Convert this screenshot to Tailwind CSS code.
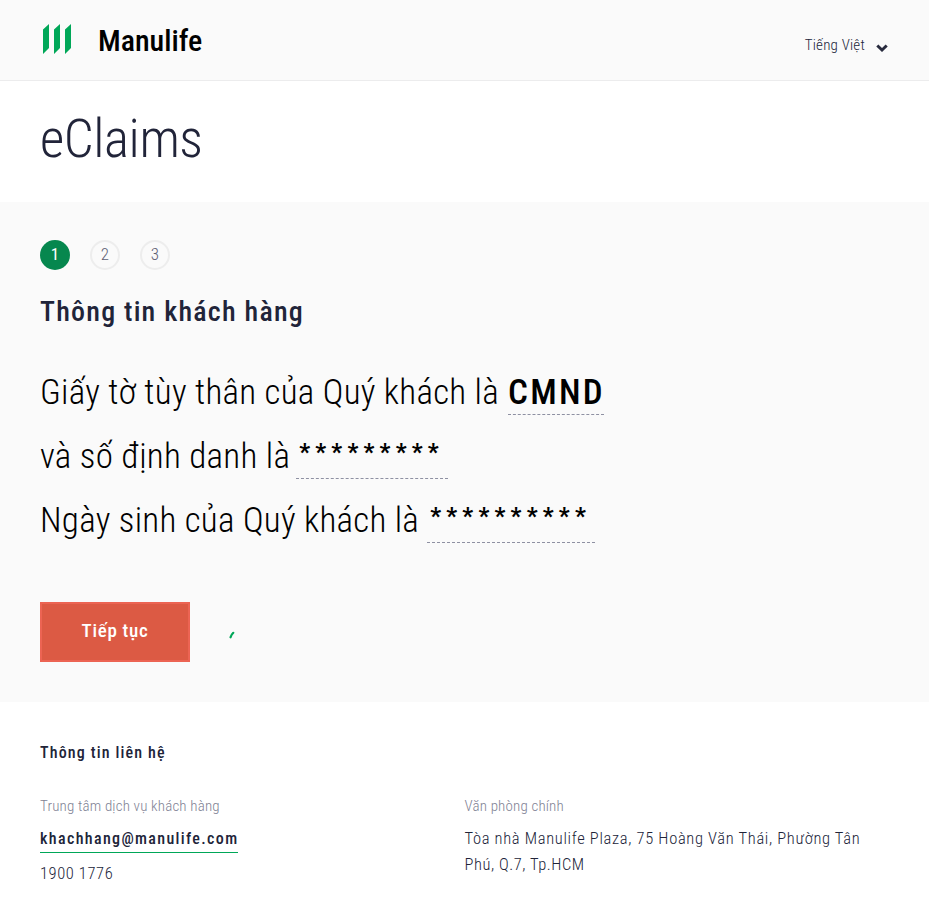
<!DOCTYPE html>
<html lang="vi">
<head>
<meta charset="utf-8">
<title>eClaims</title>
<script src="https://cdn.jsdelivr.net/npm/@tailwindcss/browser@4"></script>
</head>
<body class="bg-white font-['Roboto','Noto_Sans',sans-serif] text-[#212439] [font-stretch:75%]">
<header class="flex h-[81px] justify-between border-b border-[#ececed] bg-[#fafafa] pr-[41px] pl-[43px]">
  <div class="flex items-start">
    <svg class="mt-[24px] h-[30px] w-[28px]" viewBox="0 0 28 30" fill="#00a758"><path d="M0 5.5 6 0V24L0 30ZM11 5.5 17 0V24L11 30ZM22 5.5 28 0V24L22 30Z"/></svg>
    <span class="mt-[21px] ml-[27px] text-[30px] leading-[40px] font-medium whitespace-nowrap text-black">Manulife</span>
  </div>
  <div class="flex items-start">
    <span class="mt-[34px] text-[15px] leading-[22px] tracking-[0.2px] font-light whitespace-nowrap">Tiếng Việt</span>
    <svg class="mt-[44px] ml-[11px] h-[9px] w-[12px]" viewBox="0 0 12 9" fill="none" stroke="#282b3e" stroke-width="3"><path d="M1.3 1.5 6 6 10.7 1.5"/></svg>
  </div>
</header>
<section class="h-[121px] px-10 pt-[22px]">
  <h1 class="text-[53px] leading-[72px] tracking-[-0.45px] font-light whitespace-nowrap">eClaims</h1>
</section>
<main class="h-[500px] bg-[#fafafa] px-10 pt-[38px]">
  <ol class="flex gap-5 text-[17px] leading-[26px] font-light">
    <li class="flex size-[30px] items-center justify-center rounded-full bg-[#06874e] pb-[2px] font-normal text-white">1</li>
    <li class="flex size-[30px] items-center justify-center rounded-full border-2 border-[#ededed] pb-[2px] text-[#5e6073]">2</li>
    <li class="flex size-[30px] items-center justify-center rounded-full border-2 border-[#ededed] pb-[2px] text-[#5e6073]">3</li>
  </ol>
  <h2 class="mt-[22px] text-[28px] leading-[40px] tracking-[1.22px] font-medium whitespace-nowrap">Thông tin khách hàng</h2>
  <div class="mt-[29px] text-[35px] leading-[64px] tracking-[0.27px] font-light whitespace-nowrap text-black">
    <div class="flex h-16">Giấy tờ tùy thân của Quý khách là<span class="ml-[9px] h-[54px] w-24 border-b border-dashed border-b-[#8e90a2] tracking-[2.3px] font-medium">CMND</span></div>
    <div class="flex h-16">và số định danh là<span class="ml-[6px] h-[54px] w-[152px] border-b border-dashed border-b-[#8e90a2] pl-[3px] text-[24px] leading-[54px] tracking-[5.2px] font-bold">*********</span></div>
    <div class="flex h-16">Ngày sinh của Quý khách là<span class="ml-[8px] h-[54px] w-[168px] border-b border-dashed border-b-[#8e90a2] pl-[3px] text-[24px] leading-[54px] tracking-[5.2px] font-bold">**********</span></div>
  </div>
  <div class="mt-[49px] flex">
    <button class="h-[60px] w-[150px] border-2 border-[#ec6453] bg-[#dc5a44] pb-[2px] text-[19px] tracking-[0.7px] font-medium text-white">Tiếp tục</button>
    <svg class="mt-[29px] ml-[39px] h-[8px] w-[6px]" viewBox="0 0 6 8" fill="none" stroke="#00a758" stroke-width="2.2" stroke-linecap="round"><path d="M1.5 6.3Q2.4 3.6 4.3 1.8"/></svg>
  </div>
</main>
<footer class="grid grid-cols-[424.5px_1fr] px-10 pt-[38px] text-[16px]">
  <h3 class="col-span-2 mb-[29px] leading-[26px] tracking-[1.15px] font-medium">Thông tin liên hệ</h3>
  <div>
    <p class="text-[15px] leading-[22px] tracking-[0.17px] font-light text-[#808294]">Trung tâm dịch vụ khách hàng</p>
    <a class="mt-[6px] block h-[30px] w-[198px] border-b border-b-[#00a758] leading-[31px] tracking-[1.35px] font-medium">khachhang@manulife.com</a>
    <p class="mt-[3px] text-[16.5px] leading-[36px] tracking-[0.6px] font-light">1900 1776</p>
  </div>
  <div>
    <p class="text-[15px] leading-[22px] tracking-[0.17px] font-light text-[#808294]">Văn phòng chính</p>
    <p class="mt-[9px] text-[16.5px] leading-[26px] tracking-[0.68px] font-light whitespace-nowrap">Tòa nhà Manulife Plaza, 75 Hoàng Văn Thái, Phường Tân<br><span class="tracking-[0.55px]">Phú, Q.7, Tp.HCM</span></p>
  </div>
</footer>
</body>
</html>
